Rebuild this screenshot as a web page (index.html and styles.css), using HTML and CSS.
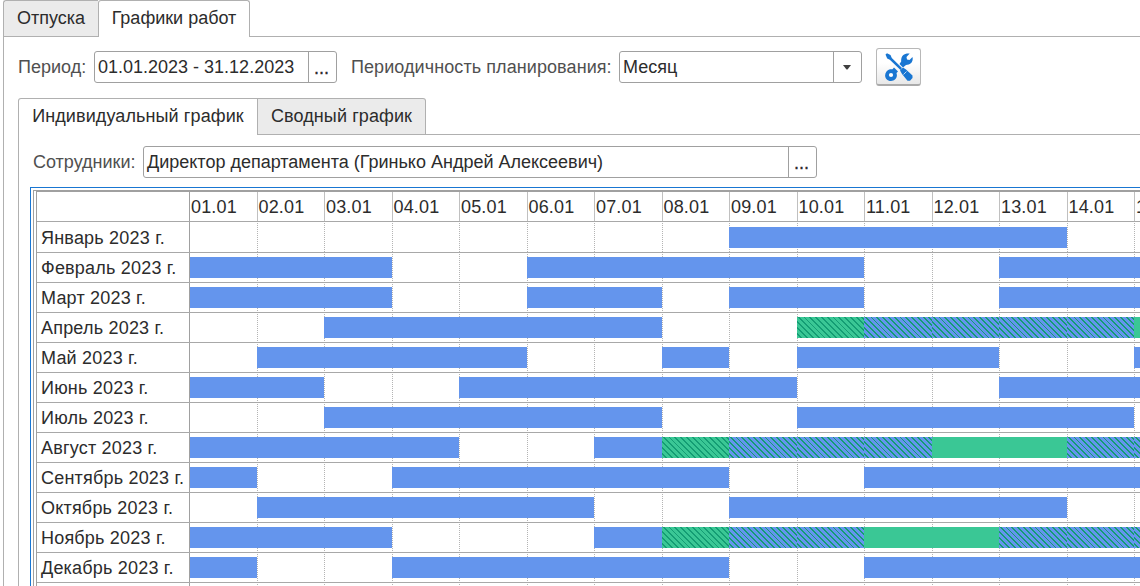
FILE: index.html
```html
<!DOCTYPE html>
<html lang="ru">
<head>
<meta charset="utf-8">
<title>Графики работ</title>
<link rel="stylesheet" href="styles.css">
</head>
<body>
<div class="page">
  <div class="tabs tabs-main">
    <div class="tab tab-vacations">Отпуска</div>
    <div class="tab tab-schedules active">Графики работ</div>
    <div class="tab-line"></div>
  </div>
  <div class="panel">
    <div class="toolbar">
      <span class="label label-period">Период:</span>
      <div class="field field-period"><span class="value">01.01.2023 - 31.12.2023</span><span class="pick">...</span></div>
      <span class="label label-frequency">Периодичность планирования:</span>
      <div class="field field-frequency"><span class="value">Месяц</span><span class="pick drop"><svg width="8" height="5" viewBox="0 0 8 5"><path d="M0 0h8L4.5 4.5h-1z" fill="#404040"/></svg></span></div>
      <div class="tool-button">
        <svg width="28" height="28" viewBox="0 0 28 28" fill="#1976d2">
          <path d="M.5 1.500 2 .2 5.500 2 6.800 5 17 15 15.500 17 4.800 6.800 2.200 5.500z"/>
          <path d="M15 17.500 18 14.500 21 16.500 27.500 22.500V25L25 27.700H22.500L17 21z"/>
          <path d="m18.500 21.500 3-3" stroke="#fff" stroke-width=".7"/>
          <path d="M24.500.7 21.500 4l.5 2.500 2.500.5 3-3c1 5-2 8-6.500 8l-3 2.500-3.500-3.500 1.700-2.500c-.5-5.500 2.800-8.500 8.300-8z"/>
          <path d="m9 14.500 4 4-1.500 1.500c1.500 4.500-1.500 8-5.500 8-5.500 0-7.500-5.500-4.500-9.500 1.500-2 4-2.500 6-2.200z"/>
          <circle cx="6" cy="22" r="2.100" fill="#fff"/>
        </svg>
      </div>
    </div>
    <div class="inner">
      <div class="tabs tabs-inner">
        <div class="tab tab-individual active">Индивидуальный график</div>
        <div class="tab tab-summary">Сводный график</div>
        <div class="tab-line"></div>
      </div>
      <div class="inner-panel">
        <div class="employee">
          <span class="label label-employee">Сотрудники:</span>
          <div class="field field-employee"><span class="value">Директор департамента (Гринько Андрей Алексеевич)</span><span class="pick">...</span></div>
        </div>
        <div class="focus"><div class="frame"><div class="chart">
          <div class="head"><div class="name"></div><div class="days"><span>01.01</span><span>02.01</span><span>03.01</span><span>04.01</span><span>05.01</span><span>06.01</span><span>07.01</span><span>08.01</span><span>09.01</span><span>10.01</span><span>11.01</span><span>12.01</span><span>13.01</span><span>14.01</span><span>15.01</span></div></div>
          <div class="row first"><div class="name">Январь 2023 г.</div><div class="track"><i class="bar" style="grid-column:9/span 5"></i></div></div>
          <div class="row"><div class="name">Февраль 2023 г.</div><div class="track"><i class="bar" style="grid-column:1/span 3"></i><i class="bar" style="grid-column:6/span 5"></i><i class="bar" style="grid-column:13/span 3"></i></div></div>
          <div class="row"><div class="name">Март 2023 г.</div><div class="track"><i class="bar" style="grid-column:1/span 3"></i><i class="bar" style="grid-column:6/span 2"></i><i class="bar" style="grid-column:9/span 2"></i><i class="bar" style="grid-column:13/span 3"></i></div></div>
          <div class="row"><div class="name">Апрель 2023 г.</div><div class="track"><i class="bar" style="grid-column:3/span 5"></i><i class="bar off hatch" style="grid-column:10"></i><i class="bar hatch" style="grid-column:11"></i><i class="bar hatch" style="grid-column:12"></i><i class="bar hatch" style="grid-column:13"></i><i class="bar hatch" style="grid-column:14"></i><i class="bar off" style="grid-column:15"></i></div></div>
          <div class="row"><div class="name">Май 2023 г.</div><div class="track"><i class="bar" style="grid-column:2/span 4"></i><i class="bar" style="grid-column:8"></i><i class="bar" style="grid-column:10/span 3"></i><i class="bar" style="grid-column:15"></i></div></div>
          <div class="row"><div class="name">Июнь 2023 г.</div><div class="track"><i class="bar" style="grid-column:1/span 2"></i><i class="bar" style="grid-column:5/span 5"></i><i class="bar" style="grid-column:13/span 3"></i></div></div>
          <div class="row"><div class="name">Июль 2023 г.</div><div class="track"><i class="bar" style="grid-column:3/span 5"></i><i class="bar" style="grid-column:10/span 5"></i></div></div>
          <div class="row"><div class="name">Август 2023 г.</div><div class="track"><i class="bar" style="grid-column:1/span 4"></i><i class="bar" style="grid-column:7"></i><i class="bar off hatch" style="grid-column:8"></i><i class="bar hatch" style="grid-column:9"></i><i class="bar hatch" style="grid-column:10"></i><i class="bar hatch" style="grid-column:11"></i><i class="bar off" style="grid-column:12/span 2"></i><i class="bar hatch" style="grid-column:14"></i><i class="bar hatch" style="grid-column:15"></i></div></div>
          <div class="row"><div class="name">Сентябрь 2023 г.</div><div class="track"><i class="bar" style="grid-column:1"></i><i class="bar" style="grid-column:4/span 5"></i><i class="bar" style="grid-column:11/span 5"></i></div></div>
          <div class="row"><div class="name">Октябрь 2023 г.</div><div class="track"><i class="bar" style="grid-column:2/span 5"></i><i class="bar" style="grid-column:9/span 5"></i></div></div>
          <div class="row"><div class="name">Ноябрь 2023 г.</div><div class="track"><i class="bar" style="grid-column:1/span 3"></i><i class="bar" style="grid-column:7"></i><i class="bar off hatch" style="grid-column:8"></i><i class="bar hatch" style="grid-column:9"></i><i class="bar hatch" style="grid-column:10"></i><i class="bar off" style="grid-column:11/span 2"></i><i class="bar hatch" style="grid-column:13"></i><i class="bar hatch" style="grid-column:14"></i><i class="bar hatch" style="grid-column:15"></i></div></div>
          <div class="row"><div class="name">Декабрь 2023 г.</div><div class="track"><i class="bar" style="grid-column:1"></i><i class="bar" style="grid-column:4/span 5"></i><i class="bar" style="grid-column:11/span 5"></i></div></div>
          <div class="row"><div class="name"></div><div class="track"></div></div>
        </div></div></div>
      </div>
    </div>
  </div>
</div>
</body>
</html>
```
FILE: styles.css
```css
* { box-sizing: border-box; }
body { margin: 0; background: #fff; color: #2c2c2c; font: 18px/20px "Liberation Sans", Arial, sans-serif; }
.page { width: 1140px; height: 586px; padding-left: 3px; overflow: hidden; white-space: nowrap; }

.tabs { display: flex; height: 37px; }
.tab { border: 1px solid #b0b0b0; background: #ebebeb; padding-top: 7px; text-align: center; }
.tab.active { background: #fff; border-bottom: 0; border-radius: 3px 3px 0 0; }
.tab-line { flex: 1; border-bottom: 1px solid #b0b0b0; }
.tab-vacations { width: 95px; border-right: 0; border-radius: 3px 0 0 0; }
.tab-schedules { width: 152px; }
.tabs-inner { letter-spacing: .1px; }
.tabs-inner .tab-individual { width: 240px; border-radius: 3px 0 0 0; }
.tabs-inner .tab-summary { width: 168px; border-left: 0; border-radius: 0 3px 0 0; }

.panel { height: 549px; border-left: 1px solid #b0b0b0; padding: 11px 0 0 14px; }
.toolbar { display: flex; height: 38px; align-items: flex-start; }
.label { color: #505050; }
.toolbar .label { padding-top: 9px; }
.label-period { width: 76px; }
.label-frequency { width: 268px; margin-left: 14px; letter-spacing: .08px; }
.field { display: flex; height: 32px; margin-top: 3px; border: 1px solid #a0a0a0; border-radius: 3px; }
.value { flex: 1; padding: 5px 0 0 3px; }
.pick { display: flex; justify-content: center; width: 28px; padding: 6px 2px 0 0; border-left: 1px solid #a0a0a0; -webkit-text-stroke: .3px; }
.drop { padding-top: 13px; }
.field-period { width: 243px; }
.field-frequency { width: 243px; }
.tool-button { display: flex; justify-content: center; width: 45px; height: 38px; margin-left: 14px; padding-top: 4px; border: 1px solid #b8b8b8; border-bottom: 2px solid #aaa; border-radius: 3px; background: linear-gradient(#fff 40%, #e8e8e8); }

.inner { padding-top: 12px; }
.inner-panel { height: 460px; border-left: 1px solid #b0b0b0; }
.employee { display: flex; height: 52px; padding: 8px 0 0 14px; }
.employee .label { width: 110px; padding-top: 9px; }
.field-employee { width: 674px; }

.focus { height: 420px; margin-left: 11px; border: solid #1976d2; border-width: 1px 0 0 1px; padding: 2px 0 0 2px; }
.frame { border: solid #a0a0a0; border-width: 1px 0 0 1px; padding-left: 2px; }
.chart { border: solid #a0a0a0; border-width: 1px 0 0 1px; overflow: hidden; }
.head, .row { display: flex; height: 30px; border-bottom: 1px solid #a8a8a8; }
.row.first { height: 31px; }
.name { position: relative; z-index: 1; flex: none; width: 153px; padding: 5px 0 0 4px; border-right: 1px solid #a0a0a0; letter-spacing: .2px; }
.days, .track { display: grid; grid-template-columns: repeat(15, 67.5px); margin-left: -.6px; flex: none; }
.days { margin-left: -1px; background: linear-gradient(90deg, #c0c0c0 1px, transparent 1px 68px, #c0c0c0 68px 69px, transparent 69px) 0 0 / 135px 100%; }
.days span { padding: 5px 0 0 2px; letter-spacing: .15px; }
.track { grid-template-rows: 21px; padding-top: 4px; background: repeating-linear-gradient(#fff 0 1px, transparent 1px 2px), linear-gradient(90deg, #b4b4b4 1px, transparent 1px 68px, #b4b4b4 68px 69px, transparent 69px) 0 0 / 135px 100%; }
.first .track { padding-top: 5px; }
.first .name { padding-top: 6px; }
.bar { background-color: #6495ed; }
.bar.off { background-color: #3ac795; }
.hatch { background-image: repeating-linear-gradient(45deg, transparent 0 2.700px, #149d74 2.700px 4.100px); }
```
